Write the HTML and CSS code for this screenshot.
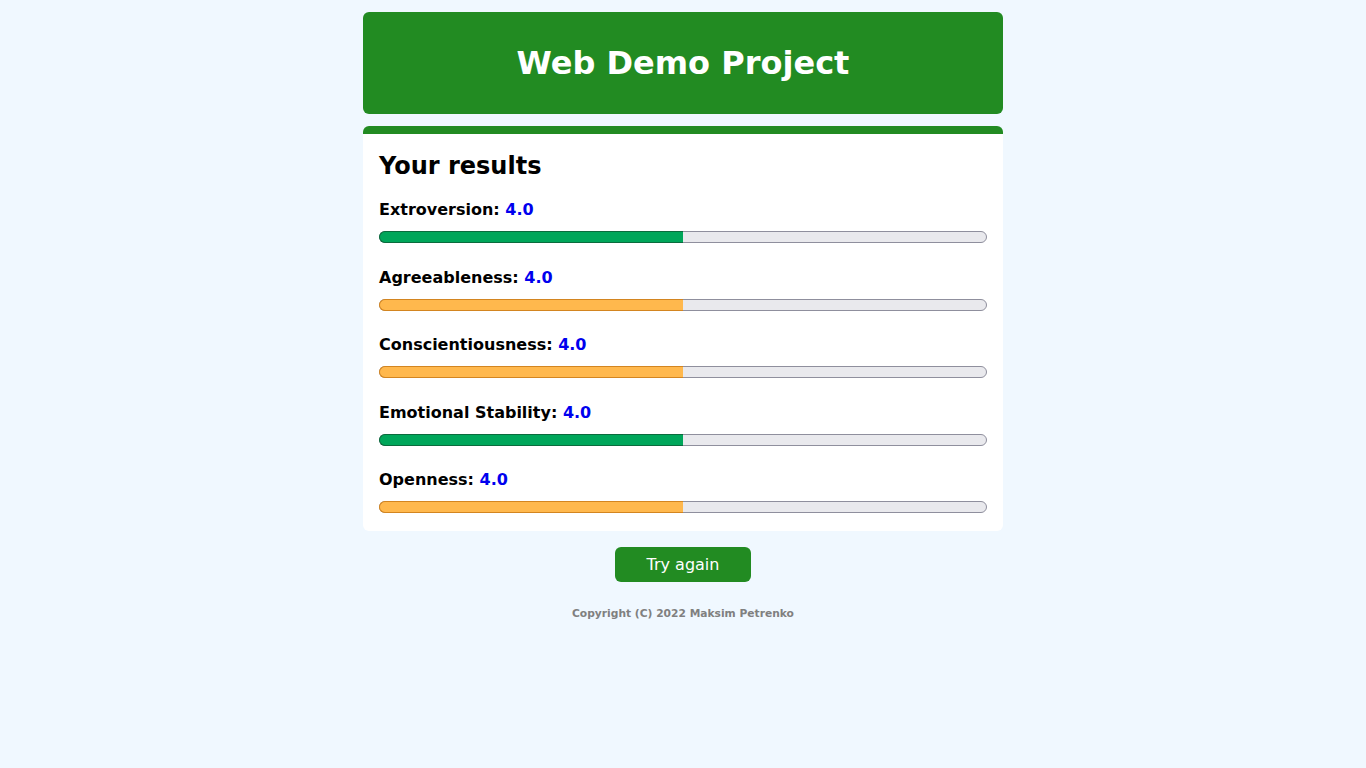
FILE: index.html
```html
<!DOCTYPE html>
<html lang="en">
<head>
<meta charset="utf-8">
<title>Web Demo Project</title>
<link rel="stylesheet" href="styles.css">
</head>
<body>
<div class="page">
  <header class="header">
    <h1 class="title">Web Demo Project</h1>
  </header>
  <section class="card">
    <h2 class="card-title">Your results</h2>
    <div class="results">
      <div class="result">
        <p class="label">Extroversion: <span class="score">4.0</span></p>
        <div class="track"><div class="fill fill-good" style="width: calc(50% + 1px)"></div></div>
      </div>
      <div class="result">
        <p class="label">Agreeableness: <span class="score">4.0</span></p>
        <div class="track"><div class="fill fill-mid" style="width: calc(50% + 1px)"></div></div>
      </div>
      <div class="result">
        <p class="label">Conscientiousness: <span class="score">4.0</span></p>
        <div class="track"><div class="fill fill-mid" style="width: calc(50% + 1px)"></div></div>
      </div>
      <div class="result">
        <p class="label">Emotional Stability: <span class="score">4.0</span></p>
        <div class="track"><div class="fill fill-good" style="width: calc(50% + 1px)"></div></div>
      </div>
      <div class="result">
        <p class="label">Openness: <span class="score">4.0</span></p>
        <div class="track"><div class="fill fill-mid" style="width: calc(50% + 1px)"></div></div>
      </div>
    </div>
  </section>
  <div class="actions">
    <button class="btn" type="button">Try again</button>
  </div>
  <footer class="footer">Copyright (C) 2022 Maksim Petrenko</footer>
</div>
</body>
</html>
```
FILE: styles.css
```css
* { box-sizing: border-box; }
html, body {
  margin: 0;
  padding: 0;
  background: #f0f8ff;
  font-family: "DejaVu Sans", Verdana, sans-serif;
  color: #000;
}
.page {
  width: 640px;
  margin: 0 auto;
  padding-top: 12px;
}
.header {
  background: #228b22;
  border-radius: 6px;
  height: 102px;
  display: flex;
  align-items: center;
  justify-content: center;
}
.title {
  margin: 0;
  color: #fff;
  font-size: 32px;
  font-weight: bold;
  line-height: 38px;
}
.card {
  margin-top: 12px;
  background: #fff;
  border-top: 8px solid #228b22;
  border-radius: 6px;
  padding: 17px 16px 18px;
}
.card-title {
  margin: 0 0 19px;
  font-size: 24px;
  line-height: 30px;
  font-weight: bold;
}
.results {
  display: flex;
  flex-direction: column;
  gap: 24.6px;
}
.label {
  margin: 0;
  font-size: 16px;
  line-height: 19px;
  font-weight: bold;
}
.score { color: #0000ee; }
.track {
  margin-top: 12px;
  height: 12px;
  background: #e9e9ed;
  border: 1px solid #8f8f9d;
  border-radius: 6px;
}
.fill {
  height: 12px;
  margin: -1px 0 0 -1px;
  border: 1px solid;
  border-right: none;
  border-radius: 6px 0 0 6px;
}
.fill-good { background: #00a65a; border-color: #0b6b3d; }
.fill-mid { background: #ffb84d; border-color: #d38520; }
.actions {
  display: flex;
  justify-content: center;
  margin-top: 16px;
}
.btn {
  width: 136px;
  height: 35px;
  background: #228b22;
  color: #fff;
  border: none;
  border-radius: 6px;
  font-family: "DejaVu Sans", Verdana, sans-serif;
  font-size: 16px;
  padding: 0;
}
.footer {
  margin-top: 25px;
  text-align: center;
  font-size: 10.7px;
  line-height: 13px;
  font-weight: bold;
  color: #808080;
}
```
